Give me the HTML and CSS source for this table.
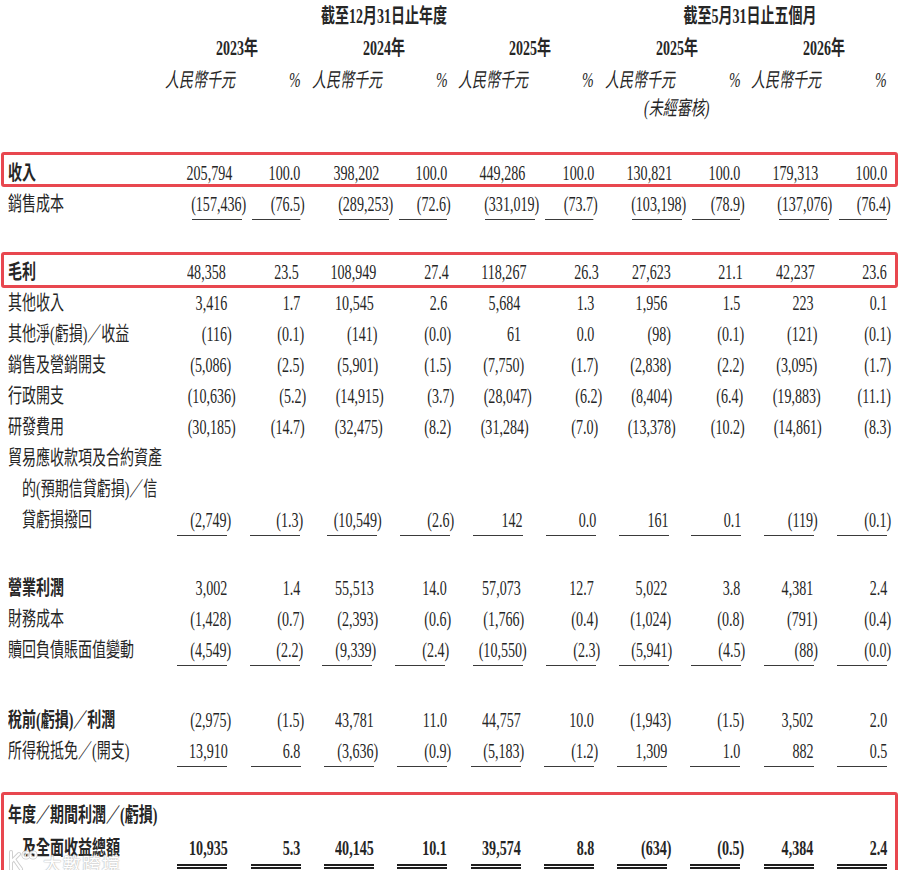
FILE: index.html
```html
<!DOCTYPE html>
<html lang="zh-Hant">
<head>
<meta charset="utf-8">
<title>綜合損益及其他全面收益表</title>
<link rel="stylesheet" href="styles.css">
</head>
<body>
<div class="sheet">
  <div class="row hd-period">
    <div></div>
    <div class="c span6"><span class="t b">截至12月31日止年度</span></div>
    <div class="c span4"><span class="t b">截至5月31日止五個月</span></div>
  </div>
  <div class="row hd-year">
    <div></div>
    <div class="c span2"><span class="t b">2023年</span></div>
    <div class="c span2"><span class="t b">2024年</span></div>
    <div class="c span2"><span class="t b">2025年</span></div>
    <div class="c span2"><span class="t b">2025年</span></div>
    <div class="c span2"><span class="t b">2026年</span></div>
  </div>
  <div class="row hd-unit">
    <div></div>
    <div class="unit"><span class="t i">人民幣千元</span></div><div class="num pct"><span class="t i">%</span></div>
    <div class="unit"><span class="t i">人民幣千元</span></div><div class="num pct"><span class="t i">%</span></div>
    <div class="unit"><span class="t i">人民幣千元</span></div><div class="num pct"><span class="t i">%</span></div>
    <div class="unit"><span class="t i">人民幣千元</span></div><div class="num pct"><span class="t i">%</span></div>
    <div class="unit"><span class="t i">人民幣千元</span></div><div class="num pct"><span class="t i">%</span></div>
  </div>
  <div class="row hd-note">
    <div></div>
    <div class="c unaudited"><span class="t i">(未經審核)</span></div>
  </div>

  <div class="hl hl-rev">
    <div class="row">
      <div class="lab"><span class="t b">收入</span></div>
      <div class="num"><span class="t">205,794</span></div><div class="num"><span class="t">100.0</span></div>
      <div class="num"><span class="t">398,202</span></div><div class="num"><span class="t">100.0</span></div>
      <div class="num"><span class="t">449,286</span></div><div class="num"><span class="t">100.0</span></div>
      <div class="num"><span class="t">130,821</span></div><div class="num"><span class="t">100.0</span></div>
      <div class="num"><span class="t">179,313</span></div><div class="num"><span class="t">100.0</span></div>
    </div>
  </div>
  <div class="row">
    <div class="lab"><span class="t">銷售成本</span></div>
    <div class="num u"><span class="t neg">(157,436)</span></div><div class="num u"><span class="t neg">(76.5)</span></div>
    <div class="num u"><span class="t neg">(289,253)</span></div><div class="num u"><span class="t neg">(72.6)</span></div>
    <div class="num u"><span class="t neg">(331,019)</span></div><div class="num u"><span class="t neg">(73.7)</span></div>
    <div class="num u"><span class="t neg">(103,198)</span></div><div class="num u"><span class="t neg">(78.9)</span></div>
    <div class="num u"><span class="t neg">(137,076)</span></div><div class="num u"><span class="t neg">(76.4)</span></div>
  </div>

  <div class="hl hl-gp sect">
    <div class="row">
      <div class="lab"><span class="t b">毛利</span></div>
      <div class="num"><span class="t">48,358</span></div><div class="num"><span class="t">23.5</span></div>
      <div class="num"><span class="t">108,949</span></div><div class="num"><span class="t">27.4</span></div>
      <div class="num"><span class="t">118,267</span></div><div class="num"><span class="t">26.3</span></div>
      <div class="num"><span class="t">27,623</span></div><div class="num"><span class="t">21.1</span></div>
      <div class="num"><span class="t">42,237</span></div><div class="num"><span class="t">23.6</span></div>
    </div>
  </div>
  <div class="row">
    <div class="lab"><span class="t">其他收入</span></div>
    <div class="num"><span class="t">3,416</span></div><div class="num"><span class="t">1.7</span></div>
    <div class="num"><span class="t">10,545</span></div><div class="num"><span class="t">2.6</span></div>
    <div class="num"><span class="t">5,684</span></div><div class="num"><span class="t">1.3</span></div>
    <div class="num"><span class="t">1,956</span></div><div class="num"><span class="t">1.5</span></div>
    <div class="num"><span class="t">223</span></div><div class="num"><span class="t">0.1</span></div>
  </div>
  <div class="row">
    <div class="lab"><span class="t">其他淨(虧損)／收益</span></div>
    <div class="num"><span class="t neg">(116)</span></div><div class="num"><span class="t neg">(0.1)</span></div>
    <div class="num"><span class="t neg">(141)</span></div><div class="num"><span class="t neg">(0.0)</span></div>
    <div class="num"><span class="t">61</span></div><div class="num"><span class="t">0.0</span></div>
    <div class="num"><span class="t neg">(98)</span></div><div class="num"><span class="t neg">(0.1)</span></div>
    <div class="num"><span class="t neg">(121)</span></div><div class="num"><span class="t neg">(0.1)</span></div>
  </div>
  <div class="row">
    <div class="lab"><span class="t">銷售及營銷開支</span></div>
    <div class="num"><span class="t neg">(5,086)</span></div><div class="num"><span class="t neg">(2.5)</span></div>
    <div class="num"><span class="t neg">(5,901)</span></div><div class="num"><span class="t neg">(1.5)</span></div>
    <div class="num"><span class="t neg">(7,750)</span></div><div class="num"><span class="t neg">(1.7)</span></div>
    <div class="num"><span class="t neg">(2,838)</span></div><div class="num"><span class="t neg">(2.2)</span></div>
    <div class="num"><span class="t neg">(3,095)</span></div><div class="num"><span class="t neg">(1.7)</span></div>
  </div>
  <div class="row">
    <div class="lab"><span class="t">行政開支</span></div>
    <div class="num"><span class="t neg">(10,636)</span></div><div class="num"><span class="t neg">(5.2)</span></div>
    <div class="num"><span class="t neg">(14,915)</span></div><div class="num"><span class="t neg">(3.7)</span></div>
    <div class="num"><span class="t neg">(28,047)</span></div><div class="num"><span class="t neg">(6.2)</span></div>
    <div class="num"><span class="t neg">(8,404)</span></div><div class="num"><span class="t neg">(6.4)</span></div>
    <div class="num"><span class="t neg">(19,883)</span></div><div class="num"><span class="t neg">(11.1)</span></div>
  </div>
  <div class="row">
    <div class="lab"><span class="t">研發費用</span></div>
    <div class="num"><span class="t neg">(30,185)</span></div><div class="num"><span class="t neg">(14.7)</span></div>
    <div class="num"><span class="t neg">(32,475)</span></div><div class="num"><span class="t neg">(8.2)</span></div>
    <div class="num"><span class="t neg">(31,284)</span></div><div class="num"><span class="t neg">(7.0)</span></div>
    <div class="num"><span class="t neg">(13,378)</span></div><div class="num"><span class="t neg">(10.2)</span></div>
    <div class="num"><span class="t neg">(14,861)</span></div><div class="num"><span class="t neg">(8.3)</span></div>
  </div>
  <div class="row">
    <div class="lab"><span class="t">貿易應收款項及合約資產</span></div>
  </div>
  <div class="row">
    <div class="lab ind"><span class="t">的(預期信貸虧損)／信</span></div>
  </div>
  <div class="row">
    <div class="lab ind"><span class="t">貸虧損撥回</span></div>
    <div class="num u"><span class="t neg">(2,749)</span></div><div class="num u"><span class="t neg">(1.3)</span></div>
    <div class="num u"><span class="t neg">(10,549)</span></div><div class="num u"><span class="t neg">(2.6)</span></div>
    <div class="num u"><span class="t">142</span></div><div class="num u"><span class="t">0.0</span></div>
    <div class="num u"><span class="t">161</span></div><div class="num u"><span class="t">0.1</span></div>
    <div class="num u"><span class="t neg">(119)</span></div><div class="num u"><span class="t neg">(0.1)</span></div>
  </div>

  <div class="row sect">
    <div class="lab"><span class="t b">營業利潤</span></div>
    <div class="num"><span class="t">3,002</span></div><div class="num"><span class="t">1.4</span></div>
    <div class="num"><span class="t">55,513</span></div><div class="num"><span class="t">14.0</span></div>
    <div class="num"><span class="t">57,073</span></div><div class="num"><span class="t">12.7</span></div>
    <div class="num"><span class="t">5,022</span></div><div class="num"><span class="t">3.8</span></div>
    <div class="num"><span class="t">4,381</span></div><div class="num"><span class="t">2.4</span></div>
  </div>
  <div class="row">
    <div class="lab"><span class="t">財務成本</span></div>
    <div class="num"><span class="t neg">(1,428)</span></div><div class="num"><span class="t neg">(0.7)</span></div>
    <div class="num"><span class="t neg">(2,393)</span></div><div class="num"><span class="t neg">(0.6)</span></div>
    <div class="num"><span class="t neg">(1,766)</span></div><div class="num"><span class="t neg">(0.4)</span></div>
    <div class="num"><span class="t neg">(1,024)</span></div><div class="num"><span class="t neg">(0.8)</span></div>
    <div class="num"><span class="t neg">(791)</span></div><div class="num"><span class="t neg">(0.4)</span></div>
  </div>
  <div class="row">
    <div class="lab"><span class="t">贖回負債賬面值變動</span></div>
    <div class="num u"><span class="t neg">(4,549)</span></div><div class="num u"><span class="t neg">(2.2)</span></div>
    <div class="num u"><span class="t neg">(9,339)</span></div><div class="num u"><span class="t neg">(2.4)</span></div>
    <div class="num u"><span class="t neg">(10,550)</span></div><div class="num u"><span class="t neg">(2.3)</span></div>
    <div class="num u"><span class="t neg">(5,941)</span></div><div class="num u"><span class="t neg">(4.5)</span></div>
    <div class="num u"><span class="t neg">(88)</span></div><div class="num u"><span class="t neg">(0.0)</span></div>
  </div>

  <div class="row sect-tax">
    <div class="lab"><span class="t b">稅前(虧損)／利潤</span></div>
    <div class="num"><span class="t neg">(2,975)</span></div><div class="num"><span class="t neg">(1.5)</span></div>
    <div class="num"><span class="t">43,781</span></div><div class="num"><span class="t">11.0</span></div>
    <div class="num"><span class="t">44,757</span></div><div class="num"><span class="t">10.0</span></div>
    <div class="num"><span class="t neg">(1,943)</span></div><div class="num"><span class="t neg">(1.5)</span></div>
    <div class="num"><span class="t">3,502</span></div><div class="num"><span class="t">2.0</span></div>
  </div>
  <div class="row">
    <div class="lab"><span class="t">所得稅抵免／(開支)</span></div>
    <div class="num u"><span class="t">13,910</span></div><div class="num u"><span class="t">6.8</span></div>
    <div class="num u"><span class="t neg">(3,636)</span></div><div class="num u"><span class="t neg">(0.9)</span></div>
    <div class="num u"><span class="t neg">(5,183)</span></div><div class="num u"><span class="t neg">(1.2)</span></div>
    <div class="num u"><span class="t">1,309</span></div><div class="num u"><span class="t">1.0</span></div>
    <div class="num u"><span class="t">882</span></div><div class="num u"><span class="t">0.5</span></div>
  </div>

  <div class="hl hl-total sect-total">
    <div class="row">
      <div class="lab"><span class="t b">年度／期間利潤／(虧損)</span></div>
    </div>
    <div class="row row-total">
      <div class="lab ind"><span class="t b">及全面收益總額</span></div>
      <div class="num uu"><span class="t b">10,935</span></div><div class="num uu"><span class="t b">5.3</span></div>
      <div class="num uu"><span class="t b">40,145</span></div><div class="num uu"><span class="t b">10.1</span></div>
      <div class="num uu"><span class="t b">39,574</span></div><div class="num uu"><span class="t b">8.8</span></div>
      <div class="num uu"><span class="t b neg">(634)</span></div><div class="num uu"><span class="t b neg">(0.5)</span></div>
      <div class="num uu"><span class="t b">4,384</span></div><div class="num uu"><span class="t b">2.4</span></div>
    </div>
    <div class="watermark">
      <svg class="wm-logo" width="32" height="22" viewBox="0 0 32 22">
        <g fill="none" stroke-linecap="round" stroke-linejoin="round">
          <path d="M4 3 V20 M4 13 L12 5 M7 10 Q11 16 14 20" stroke="#c8c8c8" stroke-width="4"/>
          <path d="M4 3 V20 M4 13 L12 5 M7 10 Q11 16 14 20" stroke="#ffffff" stroke-width="2.2"/>
          <circle cx="19" cy="6" r="3" stroke="#c8c8c8" stroke-width="3.2"/>
          <circle cx="19" cy="6" r="3" stroke="#ffffff" stroke-width="1.6"/>
          <circle cx="26" cy="6" r="3" stroke="#c8c8c8" stroke-width="3.2"/>
          <circle cx="26" cy="6" r="3" stroke="#ffffff" stroke-width="1.6"/>
        </g>
      </svg>
      <span class="wm-text">大數跨境</span>
    </div>
  </div>
</div>
</body>
</html>
```

FILE: styles.css
```css
* { box-sizing: border-box; }

html, body {
  margin: 0;
  padding: 0;
  background: #ffffff;
}

body {
  font-family: "Liberation Serif", "Noto Sans CJK TC", serif;
  font-size: 20px;
  color: #262626;
}

.sheet {
  width: 900px;
  padding-right: 3px;
}

.row {
  display: grid;
  grid-template-columns: 164px repeat(10, 1fr);
  height: 31px;
  line-height: 31px;
}

/* header rows */
.hd-period { height: 32px; line-height: 32px; }
.hd-year   { height: 33px; line-height: 33px; }
.hd-unit   { height: 30px; line-height: 30px; }
.hd-note   { height: 26px; line-height: 26px; }

.span2 { grid-column: span 2; }
.span4 { grid-column: span 4; }
.span6 { grid-column: span 6; }
.unaudited { grid-column: 8 / span 2; }

.c { text-align: center; white-space: nowrap; }

.unit {
  text-align: left;
  padding-left: 1px;
  white-space: nowrap;
}

/* condensed text, as in the printed prospectus */
.t {
  display: inline-block;
  transform: scaleX(0.7);
}
.c .t { transform-origin: center center; }
.unit .t, .lab .t { transform-origin: left center; }
.num .t {
  font-size: 21px;
  transform: scaleX(0.67);
  transform-origin: right center;
}
.num.pct .t {
  font-size: 20px;
  transform: scaleX(0.7);
}

.b { font-weight: bold; }
.i { font-style: italic; }

.lab {
  padding-left: 8px;
  white-space: nowrap;
}
.lab.ind { padding-left: 22px; }

.num {
  text-align: right;
  padding-right: 10px;
  white-space: nowrap;
}

.neg { margin-right: -4px; }

/* single underline under subtotal figures */
.u {
  background: linear-gradient(#3a3a3a, #3a3a3a) right 10px bottom 0 / 50px 1px no-repeat;
}

/* double underline under totals */
.row-total {
  height: 37px;
  margin-top: 2px;
}
.uu {
  background:
    linear-gradient(#1e1e1e, #1e1e1e) right 10px top 31.5px / 50px 2px no-repeat,
    linear-gradient(#1e1e1e, #1e1e1e) right 10px top 34.5px / 50px 2px no-repeat;
}

/* vertical rhythm between sections */
.hl-rev { margin-top: 36.5px; }
.sect { margin-top: 37px; }
.sect-tax { margin-top: 39px; }
.sect-total { margin-top: 33px; }

/* red annotation frames drawn over the statement */
.hl { position: relative; }
.hl::before {
  content: "";
  position: absolute;
  left: 1px;
  right: -1px;
  border: 3px solid #e8474f;
  border-radius: 3px;
  pointer-events: none;
}
.hl-rev::before   { top: -6px;   bottom: 2px; }
.hl-gp::before    { top: -5px;   bottom: 0; }
.hl-total::before { top: -7.5px; bottom: -4.5px; }

/* faint watermark in the lower-left corner */
.watermark {
  position: absolute;
  left: 7px;
  bottom: -3px;
  display: flex;
  align-items: flex-end;
  gap: 4px;
  opacity: 0.9;
}
.wm-logo { display: block; margin-bottom: 2px; }
.wm-text {
  font-family: "Noto Sans CJK SC", "Noto Sans CJK TC", sans-serif;
  font-size: 18.5px;
  line-height: 20px;
  letter-spacing: 1px;
  color: #ffffff;
  text-shadow: 0 0 1px #b8b8b8, 0 0 1px #b8b8b8, 0 0 2px #d0d0d0;
}
```
